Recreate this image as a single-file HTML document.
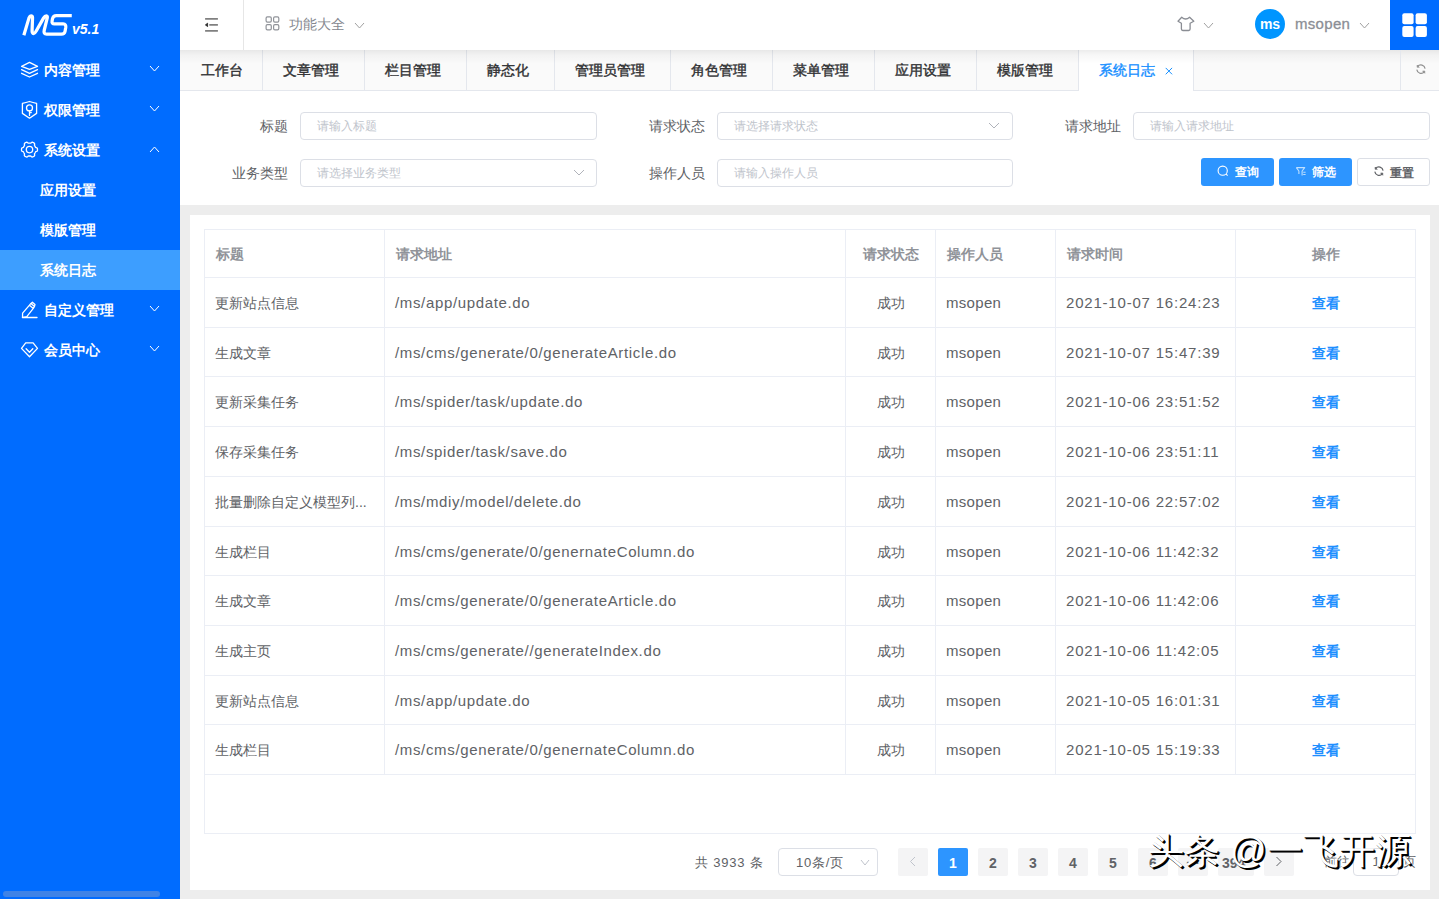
<!DOCTYPE html>
<html><head><meta charset="utf-8">
<style>
*{margin:0;padding:0;box-sizing:border-box}
html,body{width:1439px;height:899px;overflow:hidden;background:#ededed;font-family:"Liberation Sans",sans-serif;position:relative}
.abs{position:absolute}
#side{position:absolute;left:0;top:0;width:180px;height:899px;background:#006cff;color:#fff}
.mi{position:absolute;left:0;width:180px;height:40px;font-size:14px;line-height:41px;font-weight:bold}
.mi .t{position:absolute;left:44px;top:0}
.sub{position:absolute;left:0;width:180px;height:40px;font-size:14px;line-height:41px;font-weight:bold}
.sub .t{position:absolute;left:40px;top:0}
.sub.act{background:#3d9eff}
#hdr{position:absolute;left:180px;top:0;width:1259px;height:50px;background:#fff}
#tabs{position:absolute;left:180px;top:50px;width:1259px;height:41px;background:#fafafa;border-bottom:1px solid #e4e7ed}
.tab{position:absolute;top:0;height:40px;border-right:1px solid #e4e7ed;font-size:14px;font-weight:normal;-webkit-text-stroke:0.4px #303133;color:#303133;line-height:40px;padding-left:20px}
.tab.act{background:#fff;color:#1890ff;height:41px;-webkit-text-stroke:0.4px #1890ff}
.tab .x{position:absolute;left:86px;top:0;font-size:12px;font-weight:normal}
#filter{position:absolute;left:180px;top:91px;width:1259px;height:114px;background:#fff}
.lbl{position:absolute;font-size:14px;color:#606266;line-height:28px;height:28px;text-align:right;width:100px}
.inp{position:absolute;height:28px;border:1px solid #dcdfe6;border-radius:4px;background:#fff;font-size:12px;color:#c0c4cc;line-height:26px;padding-left:16px}
.btn{position:absolute;top:158px;height:28px;width:73px;border-radius:3px;font-size:12px;font-weight:bold;line-height:28px}
.btn.p{background:#2d95ff;color:#fff}
.btn.d{background:#fff;border:1px solid #dcdfe6;color:#606266}
.btn span{position:absolute;top:0}
#card{position:absolute;left:190px;top:215px;width:1240px;height:675px;background:#fff}
#tbl{position:absolute;left:204px;top:229px;width:1212px;height:605px;border:1px solid #ebeef5;background:#fff}
.vl{position:absolute;width:1px;background:#ebeef5}
.hl{position:absolute;left:0;width:1210px;height:1px;background:#ebeef5}
.th{position:absolute;font-size:14px;font-weight:bold;color:#909399;padding:0 10px 0 12px;white-space:nowrap}
.td{position:absolute;font-size:14px;color:#606266;padding:0 10px 0 11px;white-space:nowrap}
.l{text-align:left} .c{text-align:center}
.en{font-size:15px;letter-spacing:0.3px}
.dt{letter-spacing:0.8px} .url{letter-spacing:0.65px}
.lk{color:#1e8fff;font-weight:bold}
.pg{position:absolute;top:848px;height:28px;width:30px;border-radius:2px;background:#f4f4f5;color:#606266;font-size:14px;font-weight:bold;text-align:center;line-height:30px}
</style></head><body>
<div id="side">
<svg class="abs" style="left:18px;top:10px" width="60" height="30" viewBox="0 0 1439 720">
<path d="M140 605 L262 195 Q282 138 322 138 Q352 138 348 195 L338 480 Q334 565 375 565 Q405 565 440 500 L612 195 Q645 138 680 138 Q712 138 702 190 L630 480 Q605 580 690 580 L1040 580 Q1115 580 1128 515 L1145 420 Q1158 335 1085 335 L875 335 Q805 335 818 265 L828 205 Q845 133 920 133 L1290 133" fill="none" stroke="#fff" stroke-width="78" stroke-linejoin="round"/>
</svg>
<div class="abs" style="left:72px;top:21px;font-size:14px;line-height:16px;font-weight:bold;font-style:italic;color:#fff;letter-spacing:0px">v5.1</div>
<div class="mi" style="top:50px"><span class="t">内容管理</span></div><svg class="abs" style="left:18px;top:58px" width="24" height="24" viewBox="0 0 24 24" fill="none" stroke="#fff" stroke-width="1.3" stroke-linejoin="round" stroke-linecap="round"><path d="M3.6 8.4 L11.5 4.4 L19.5 8.4 L11.5 11.4Z"/><path d="M3.6 11.6 L11.5 15.4 L19.5 11.6"/><path d="M3.6 15.3 L11.5 19 L19.5 15.3"/></svg><svg class="abs" style="left:148.5px;top:65px" width="11" height="7" viewBox="-1 -1 11 7"><path d="M0 0 L4.5 5 L9 0" fill="none" stroke="#fff" stroke-width="1.0"/></svg><div class="mi" style="top:90px"><span class="t">权限管理</span></div><svg class="abs" style="left:18px;top:98px" width="24" height="24" viewBox="0 0 24 24" fill="none" stroke="#fff" stroke-width="1.3" stroke-linejoin="round" stroke-linecap="round"><path d="M4.4 5.4 Q8 4.6 11.5 3.5 Q15 4.6 18.6 5.4 L18.6 15.4 L11.5 20.2 L4.4 15.4Z"/><circle cx="11.5" cy="9.9" r="3"/><path d="M11.5 12.9 L11.5 17.4 M11.5 14.6 L13.3 14.6"/></svg><svg class="abs" style="left:148.5px;top:105px" width="11" height="7" viewBox="-1 -1 11 7"><path d="M0 0 L4.5 5 L9 0" fill="none" stroke="#fff" stroke-width="1.0"/></svg><div class="mi" style="top:130px"><span class="t">系统设置</span></div><svg class="abs" style="left:18px;top:138px" width="24" height="24" viewBox="0 0 24 24" fill="none" stroke="#fff" stroke-width="1.3" stroke-linejoin="round" stroke-linecap="round"><path d="M19.49 11.60 L19.48 11.25 L19.45 10.90 L19.39 10.56 L19.26 10.23 L18.97 9.94 L18.45 9.74 L17.93 9.57 L17.63 9.37 L17.45 9.13 L17.32 8.89 L17.19 8.64 L17.05 8.39 L16.91 8.15 L16.76 7.92 L16.61 7.68 L16.50 7.41 L16.47 7.04 L16.59 6.51 L16.67 5.96 L16.56 5.56 L16.34 5.29 L16.08 5.06 L15.79 4.86 L15.49 4.68 L15.19 4.52 L14.87 4.37 L14.54 4.25 L14.19 4.20 L13.80 4.30 L13.36 4.65 L12.96 5.02 L12.63 5.18 L12.34 5.21 L12.06 5.20 L11.78 5.19 L11.50 5.19 L11.22 5.19 L10.94 5.20 L10.66 5.21 L10.37 5.18 L10.04 5.02 L9.64 4.65 L9.20 4.30 L8.81 4.20 L8.46 4.25 L8.13 4.37 L7.81 4.52 L7.51 4.68 L7.21 4.86 L6.92 5.06 L6.66 5.29 L6.44 5.56 L6.33 5.96 L6.41 6.51 L6.53 7.04 L6.50 7.41 L6.39 7.68 L6.24 7.92 L6.09 8.15 L5.95 8.39 L5.81 8.64 L5.68 8.89 L5.55 9.13 L5.37 9.37 L5.07 9.57 L4.55 9.74 L4.03 9.94 L3.74 10.23 L3.61 10.56 L3.55 10.90 L3.52 11.25 L3.51 11.60 L3.52 11.95 L3.55 12.30 L3.61 12.64 L3.74 12.97 L4.03 13.26 L4.55 13.46 L5.07 13.63 L5.37 13.83 L5.55 14.07 L5.68 14.31 L5.81 14.56 L5.95 14.81 L6.09 15.05 L6.24 15.28 L6.39 15.52 L6.50 15.79 L6.53 16.16 L6.41 16.69 L6.33 17.24 L6.44 17.64 L6.66 17.91 L6.92 18.14 L7.21 18.34 L7.51 18.52 L7.81 18.68 L8.13 18.83 L8.46 18.95 L8.81 19.00 L9.20 18.90 L9.64 18.55 L10.04 18.18 L10.37 18.02 L10.66 17.99 L10.94 18.00 L11.22 18.01 L11.50 18.01 L11.78 18.01 L12.06 18.00 L12.34 17.99 L12.63 18.02 L12.96 18.18 L13.36 18.55 L13.80 18.90 L14.19 19.00 L14.54 18.95 L14.87 18.83 L15.19 18.68 L15.49 18.52 L15.79 18.34 L16.08 18.14 L16.34 17.91 L16.56 17.64 L16.67 17.24 L16.59 16.69 L16.47 16.16 L16.50 15.79 L16.61 15.52 L16.76 15.28 L16.91 15.05 L17.05 14.81 L17.19 14.56 L17.32 14.31 L17.45 14.07 L17.63 13.83 L17.93 13.63 L18.45 13.46 L18.97 13.26 L19.26 12.97 L19.39 12.64 L19.45 12.30 L19.48 11.95Z"/><circle cx="11.5" cy="11.6" r="3.2"/></svg><svg class="abs" style="left:148.5px;top:145.5px" width="11" height="7" viewBox="-1 -1 11 7"><path d="M0 5 L4.5 0 L9 5" fill="none" stroke="#fff" stroke-width="1.0"/></svg><div class="mi" style="top:290px"><span class="t">自定义管理</span></div><svg class="abs" style="left:18px;top:298px" width="24" height="24" viewBox="0 0 24 24" fill="none" stroke="#fff" stroke-width="1.3" stroke-linejoin="round" stroke-linecap="round"><path d="M4.5 19.5 L4.6 15.2 L11.5 7.2 L15.3 10.4 L8.8 18.6Z M11.5 7.2 L12.9 5.4 L14.4 4.2 L17 6.4 L16.5 8.4 L15.3 10.4 M12.9 5.4 L16.5 8.4 M4.4 19.5 L19 19.5"/></svg><svg class="abs" style="left:148.5px;top:305px" width="11" height="7" viewBox="-1 -1 11 7"><path d="M0 0 L4.5 5 L9 0" fill="none" stroke="#fff" stroke-width="1.0"/></svg><div class="mi" style="top:330px"><span class="t">会员中心</span></div><svg class="abs" style="left:18px;top:338px" width="24" height="24" viewBox="0 0 24 24" fill="none" stroke="#fff" stroke-width="1.3" stroke-linejoin="round" stroke-linecap="round"><path d="M7.7 4.9 L15.1 4.9 L19.5 10.4 L11.5 18.7 L3.5 10.4Z"/><path d="M8.1 10.7 L11.5 14.3 L14.8 10.7"/></svg><svg class="abs" style="left:148.5px;top:345px" width="11" height="7" viewBox="-1 -1 11 7"><path d="M0 0 L4.5 5 L9 0" fill="none" stroke="#fff" stroke-width="1.0"/></svg><div class="sub" style="top:170px"><span class="t">应用设置</span></div><div class="sub" style="top:210px"><span class="t">模版管理</span></div><div class="sub act" style="top:250px"><span class="t">系统日志</span></div>
<div class="abs" style="left:3px;top:891px;width:157px;height:6px;border-radius:3px;background:rgba(140,160,200,0.45)"></div>
</div>
<div id="hdr">
 <svg class="abs" style="left:20px;top:13px" width="24" height="24" viewBox="0 0 24 24"><path d="M5.1 5.9 H17.9 M9.3 11.9 H17.9 M5.1 17.9 H17.9" stroke="#808080" stroke-width="1.6"/><path d="M5.4 11.9 L7.6 10.2 L7.6 13.6Z" fill="#222" stroke="#222" stroke-width="0.8" stroke-linejoin="round"/></svg>
 <div class="abs" style="left:63px;top:0;width:1px;height:50px;background:#e6e6e6"></div>
 <svg class="abs" style="left:80px;top:11px" width="24" height="24" viewBox="0 0 24 24" fill="none" stroke="#909399" stroke-width="1.2"><rect x="6.1" y="5.9" width="5.2" height="5.2" rx="1.3"/><rect x="13.6" y="5.9" width="5.2" height="5.2" rx="1.3"/><rect x="6.1" y="13.6" width="5.2" height="5.2" rx="1.3"/><rect x="13.6" y="13.6" width="5.2" height="5.2" rx="1.3"/></svg>
 <div class="abs" style="left:109px;top:-1px;line-height:50px;font-size:14px;color:#85888f">功能大全</div>
 <svg class="abs" style="left:173.5px;top:22px" width="11" height="7" viewBox="-1 -1 11 7"><path d="M0 0 L4.5 5 L9 0" fill="none" stroke="#a0a0a0" stroke-width="1.0"/></svg>
 <svg class="abs" style="left:994px;top:12px" width="24" height="24" viewBox="0 0 24 24" fill="none" stroke="#8a8d94" stroke-width="1.3" stroke-linejoin="round"><path d="M7.7 5.3 Q11.6 8.8 15.6 5.3 L19.8 9.2 L16.1 11.3 L16.1 17.1 Q16.1 18.5 14.7 18.5 L8.8 18.5 Q7.4 18.5 7.4 17.1 L7.4 11.3 L4 9.2Z"/></svg>
 <svg class="abs" style="left:1023px;top:22px" width="11" height="7" viewBox="-1 -1 11 7"><path d="M0 0 L4.5 5 L9 0" fill="none" stroke="#a0a0a0" stroke-width="1.0"/></svg>
 <div class="abs" style="left:1075px;top:9px;width:30px;height:30px;border-radius:15px;background:#0095ff;color:#fff;font-size:14px;font-weight:bold;text-align:center;line-height:31px">ms</div>
 <div class="abs" style="left:1115px;top:0;line-height:48px;font-size:15px;color:#8b8e95;letter-spacing:0.3px;-webkit-text-stroke:0.3px #8b8e95">msopen</div>
 <svg class="abs" style="left:1179px;top:21.8px" width="11" height="7" viewBox="-1 -1 11 7"><path d="M0 0 L4.5 5 L9 0" fill="none" stroke="#a0a0a0" stroke-width="1.0"/></svg>
 <div class="abs" style="left:1210px;top:0;width:49px;height:50px;background:#006cff"></div>
 <svg class="abs" style="left:1222px;top:13px" width="26" height="25" viewBox="0 0 26 25" fill="#fff"><rect x="0.3" y="0.2" width="11.3" height="11" rx="2"/><rect x="13.6" y="0.2" width="11.3" height="11" rx="2"/><rect x="0.3" y="13" width="11.3" height="11" rx="2"/><rect x="13.6" y="13" width="11.3" height="11" rx="2"/></svg>
</div>
<div id="tabs">
<div class="tab" style="left:1px;width:82px">工作台</div><div class="tab" style="left:83px;width:102px">文章管理</div><div class="tab" style="left:185px;width:102px">栏目管理</div><div class="tab" style="left:287px;width:88px">静态化</div><div class="tab" style="left:375px;width:116px">管理员管理</div><div class="tab" style="left:491px;width:102px">角色管理</div><div class="tab" style="left:593px;width:102px">菜单管理</div><div class="tab" style="left:695px;width:102px">应用设置</div><div class="tab" style="left:797px;width:102px">模版管理</div><div class="tab act" style="left:899px;width:115px">系统日志</div><svg class="abs" style="left:985px;top:17px" width="8" height="8" viewBox="0 0 8 8" stroke="#1890ff" stroke-width="1"><path d="M0.7 0.9 L7.1 7.3 M7.1 0.9 L0.7 7.3"/></svg><div class="abs" style="left:0;top:0;width:1259px;height:14px;background:linear-gradient(rgba(0,0,0,0.075),rgba(0,0,0,0.03) 5px,rgba(0,0,0,0) 14px)"></div><div class="abs" style="left:1220px;top:0;width:1px;height:40px;background:#e4e7ed"></div>
<svg class="abs" style="left:1229px;top:7px" width="24" height="24" viewBox="0 0 24 24" fill="none" stroke="#909090" stroke-width="1.2"><path d="M8.6 9.4 A4.3 4.3 0 0 1 16.1 11.6"/><path d="M15.3 14.9 A4.3 4.3 0 0 1 7.8 12.7"/><path d="M8.1 8.0 L8.1 10.3 L10.3 10.3Z" fill="#909090" stroke-width="0.6"/><path d="M15.8 16.3 L15.8 14.0 L13.6 14.0Z" fill="#909090" stroke-width="0.6"/></svg>
</div>
<div id="filter">
 <div class="lbl" style="left:8px;top:21px">标题</div>
 <div class="inp" style="left:120px;top:21px;width:297px">请输入标题</div>
 <div class="lbl" style="left:425px;top:21px">请求状态</div>
 <div class="inp" style="left:537px;top:21px;width:296px">请选择请求状态</div>
 <svg class="abs" style="left:808px;top:31px" width="12" height="7" viewBox="-1 -1 12 7"><path d="M0 0 L5.0 5 L10 0" fill="none" stroke="#b0b3ba" stroke-width="1.0"/></svg>
 <div class="lbl" style="left:841px;top:21px">请求地址</div>
 <div class="inp" style="left:953px;top:21px;width:297px">请输入请求地址</div>
 <div class="lbl" style="left:8px;top:68px">业务类型</div>
 <div class="inp" style="left:120px;top:68px;width:297px">请选择业务类型</div>
 <svg class="abs" style="left:393px;top:78px" width="12" height="7" viewBox="-1 -1 12 7"><path d="M0 0 L5.0 5 L10 0" fill="none" stroke="#b0b3ba" stroke-width="1.0"/></svg>
 <div class="lbl" style="left:425px;top:68px">操作人员</div>
 <div class="inp" style="left:537px;top:68px;width:296px">请输入操作人员</div>
</div>
<div class="btn p" style="left:1201px"><span style="left:34px">查询</span></div>
<svg class="abs" style="left:1211px;top:159px" width="24" height="24" viewBox="0 0 24 24" fill="none" stroke="#fff" stroke-width="1.1"><circle cx="11.7" cy="11.7" r="4.6"/><path d="M15.2 15.2 L16.6 16.7"/></svg>
<div class="btn p" style="left:1279px"><span style="left:33px">筛选</span></div>
<svg class="abs" style="left:1289px;top:159px" width="24" height="24" viewBox="0 0 24 24" fill="none" stroke="#bfe0ff" stroke-width="1.1" stroke-linejoin="round"><path d="M7.3 8.6 L15.7 8.6 L13.1 12 L13.1 16.5 M9.9 15 L9.9 12 L7.3 8.6"/><path d="M14.2 13.3 H16.6 M14.2 15.5 H16.6"/></svg>
<div class="btn d" style="left:1357px"><span style="left:32px">重置</span></div>
<svg class="abs" style="left:1367px;top:159px" width="24" height="24" viewBox="0 0 24 24" fill="none" stroke="#606266" stroke-width="1.2"><path d="M8.6 9.4 A4.3 4.3 0 0 1 16.1 11.6"/><path d="M15.3 14.9 A4.3 4.3 0 0 1 7.8 12.7"/><path d="M8.1 8.0 L8.1 10.3 L10.3 10.3Z" fill="#606266" stroke-width="0.6"/><path d="M15.8 16.3 L15.8 14.0 L13.6 14.0Z" fill="#606266" stroke-width="0.6"/></svg>
<div id="card"></div>
<div id="tbl">
<div class="vl" style="left:179px;top:0;height:545.0px"></div><div class="vl" style="left:640px;top:0;height:545.0px"></div><div class="vl" style="left:730px;top:0;height:545.0px"></div><div class="vl" style="left:850px;top:0;height:545.0px"></div><div class="vl" style="left:1030px;top:0;height:545.0px"></div><div class="hl" style="top:47px"></div><div class="hl" style="top:96.7px"></div><div class="hl" style="top:146.4px"></div><div class="hl" style="top:196.1px"></div><div class="hl" style="top:245.8px"></div><div class="hl" style="top:295.5px"></div><div class="hl" style="top:345.2px"></div><div class="hl" style="top:394.9px"></div><div class="hl" style="top:444.6px"></div><div class="hl" style="top:494.3px"></div><div class="hl" style="top:544.0px"></div><div class="th l" style="left:-1.0px;width:180.0px;top:1px;height:47px;line-height:47px">标题</div><div class="th l" style="left:179.0px;width:461.0px;top:1px;height:47px;line-height:47px">请求地址</div><div class="th c" style="left:640.0px;width:90.0px;top:1px;height:47px;line-height:47px">请求状态</div><div class="th l" style="left:730.0px;width:120.0px;top:1px;height:47px;line-height:47px">操作人员</div><div class="th l" style="left:850.0px;width:180.0px;top:1px;height:47px;line-height:47px">请求时间</div><div class="th c" style="left:1030.0px;width:180.0px;top:1px;height:47px;line-height:47px">操作</div><div class="td l cj" style="left:-1.0px;width:180.0px;top:49.0px;height:48.7px;line-height:48.7px">更新站点信息</div><div class="td l en url" style="left:179.0px;width:461.0px;top:49.0px;height:48.7px;line-height:48.7px">/ms/app/update.do</div><div class="td c cj" style="left:640.0px;width:90.0px;top:49.0px;height:48.7px;line-height:48.7px">成功</div><div class="td l en" style="left:730.0px;width:120.0px;top:49.0px;height:48.7px;line-height:48.7px">msopen</div><div class="td l en dt" style="left:850.0px;width:180.0px;top:49.0px;height:48.7px;line-height:48.7px">2021-10-07 16:24:23</div><div class="td c cj lk" style="left:1030.0px;width:180.0px;top:49.0px;height:48.7px;line-height:48.7px">查看</div><div class="td l cj" style="left:-1.0px;width:180.0px;top:98.7px;height:48.7px;line-height:48.7px">生成文章</div><div class="td l en url" style="left:179.0px;width:461.0px;top:98.7px;height:48.7px;line-height:48.7px">/ms/cms/generate/0/generateArticle.do</div><div class="td c cj" style="left:640.0px;width:90.0px;top:98.7px;height:48.7px;line-height:48.7px">成功</div><div class="td l en" style="left:730.0px;width:120.0px;top:98.7px;height:48.7px;line-height:48.7px">msopen</div><div class="td l en dt" style="left:850.0px;width:180.0px;top:98.7px;height:48.7px;line-height:48.7px">2021-10-07 15:47:39</div><div class="td c cj lk" style="left:1030.0px;width:180.0px;top:98.7px;height:48.7px;line-height:48.7px">查看</div><div class="td l cj" style="left:-1.0px;width:180.0px;top:148.4px;height:48.7px;line-height:48.7px">更新采集任务</div><div class="td l en url" style="left:179.0px;width:461.0px;top:148.4px;height:48.7px;line-height:48.7px">/ms/spider/task/update.do</div><div class="td c cj" style="left:640.0px;width:90.0px;top:148.4px;height:48.7px;line-height:48.7px">成功</div><div class="td l en" style="left:730.0px;width:120.0px;top:148.4px;height:48.7px;line-height:48.7px">msopen</div><div class="td l en dt" style="left:850.0px;width:180.0px;top:148.4px;height:48.7px;line-height:48.7px">2021-10-06 23:51:52</div><div class="td c cj lk" style="left:1030.0px;width:180.0px;top:148.4px;height:48.7px;line-height:48.7px">查看</div><div class="td l cj" style="left:-1.0px;width:180.0px;top:198.1px;height:48.7px;line-height:48.7px">保存采集任务</div><div class="td l en url" style="left:179.0px;width:461.0px;top:198.1px;height:48.7px;line-height:48.7px">/ms/spider/task/save.do</div><div class="td c cj" style="left:640.0px;width:90.0px;top:198.1px;height:48.7px;line-height:48.7px">成功</div><div class="td l en" style="left:730.0px;width:120.0px;top:198.1px;height:48.7px;line-height:48.7px">msopen</div><div class="td l en dt" style="left:850.0px;width:180.0px;top:198.1px;height:48.7px;line-height:48.7px">2021-10-06 23:51:11</div><div class="td c cj lk" style="left:1030.0px;width:180.0px;top:198.1px;height:48.7px;line-height:48.7px">查看</div><div class="td l cj" style="left:-1.0px;width:180.0px;top:247.8px;height:48.7px;line-height:48.7px">批量删除自定义模型列...</div><div class="td l en url" style="left:179.0px;width:461.0px;top:247.8px;height:48.7px;line-height:48.7px">/ms/mdiy/model/delete.do</div><div class="td c cj" style="left:640.0px;width:90.0px;top:247.8px;height:48.7px;line-height:48.7px">成功</div><div class="td l en" style="left:730.0px;width:120.0px;top:247.8px;height:48.7px;line-height:48.7px">msopen</div><div class="td l en dt" style="left:850.0px;width:180.0px;top:247.8px;height:48.7px;line-height:48.7px">2021-10-06 22:57:02</div><div class="td c cj lk" style="left:1030.0px;width:180.0px;top:247.8px;height:48.7px;line-height:48.7px">查看</div><div class="td l cj" style="left:-1.0px;width:180.0px;top:297.5px;height:48.7px;line-height:48.7px">生成栏目</div><div class="td l en url" style="left:179.0px;width:461.0px;top:297.5px;height:48.7px;line-height:48.7px">/ms/cms/generate/0/genernateColumn.do</div><div class="td c cj" style="left:640.0px;width:90.0px;top:297.5px;height:48.7px;line-height:48.7px">成功</div><div class="td l en" style="left:730.0px;width:120.0px;top:297.5px;height:48.7px;line-height:48.7px">msopen</div><div class="td l en dt" style="left:850.0px;width:180.0px;top:297.5px;height:48.7px;line-height:48.7px">2021-10-06 11:42:32</div><div class="td c cj lk" style="left:1030.0px;width:180.0px;top:297.5px;height:48.7px;line-height:48.7px">查看</div><div class="td l cj" style="left:-1.0px;width:180.0px;top:347.2px;height:48.7px;line-height:48.7px">生成文章</div><div class="td l en url" style="left:179.0px;width:461.0px;top:347.2px;height:48.7px;line-height:48.7px">/ms/cms/generate/0/generateArticle.do</div><div class="td c cj" style="left:640.0px;width:90.0px;top:347.2px;height:48.7px;line-height:48.7px">成功</div><div class="td l en" style="left:730.0px;width:120.0px;top:347.2px;height:48.7px;line-height:48.7px">msopen</div><div class="td l en dt" style="left:850.0px;width:180.0px;top:347.2px;height:48.7px;line-height:48.7px">2021-10-06 11:42:06</div><div class="td c cj lk" style="left:1030.0px;width:180.0px;top:347.2px;height:48.7px;line-height:48.7px">查看</div><div class="td l cj" style="left:-1.0px;width:180.0px;top:396.9px;height:48.7px;line-height:48.7px">生成主页</div><div class="td l en url" style="left:179.0px;width:461.0px;top:396.9px;height:48.7px;line-height:48.7px">/ms/cms/generate//generateIndex.do</div><div class="td c cj" style="left:640.0px;width:90.0px;top:396.9px;height:48.7px;line-height:48.7px">成功</div><div class="td l en" style="left:730.0px;width:120.0px;top:396.9px;height:48.7px;line-height:48.7px">msopen</div><div class="td l en dt" style="left:850.0px;width:180.0px;top:396.9px;height:48.7px;line-height:48.7px">2021-10-06 11:42:05</div><div class="td c cj lk" style="left:1030.0px;width:180.0px;top:396.9px;height:48.7px;line-height:48.7px">查看</div><div class="td l cj" style="left:-1.0px;width:180.0px;top:446.6px;height:48.7px;line-height:48.7px">更新站点信息</div><div class="td l en url" style="left:179.0px;width:461.0px;top:446.6px;height:48.7px;line-height:48.7px">/ms/app/update.do</div><div class="td c cj" style="left:640.0px;width:90.0px;top:446.6px;height:48.7px;line-height:48.7px">成功</div><div class="td l en" style="left:730.0px;width:120.0px;top:446.6px;height:48.7px;line-height:48.7px">msopen</div><div class="td l en dt" style="left:850.0px;width:180.0px;top:446.6px;height:48.7px;line-height:48.7px">2021-10-05 16:01:31</div><div class="td c cj lk" style="left:1030.0px;width:180.0px;top:446.6px;height:48.7px;line-height:48.7px">查看</div><div class="td l cj" style="left:-1.0px;width:180.0px;top:496.3px;height:48.7px;line-height:48.7px">生成栏目</div><div class="td l en url" style="left:179.0px;width:461.0px;top:496.3px;height:48.7px;line-height:48.7px">/ms/cms/generate/0/genernateColumn.do</div><div class="td c cj" style="left:640.0px;width:90.0px;top:496.3px;height:48.7px;line-height:48.7px">成功</div><div class="td l en" style="left:730.0px;width:120.0px;top:496.3px;height:48.7px;line-height:48.7px">msopen</div><div class="td l en dt" style="left:850.0px;width:180.0px;top:496.3px;height:48.7px;line-height:48.7px">2021-10-05 15:19:33</div><div class="td c cj lk" style="left:1030.0px;width:180.0px;top:496.3px;height:48.7px;line-height:48.7px">查看</div>
</div>
<div class="abs" style="left:695px;top:849px;line-height:28px;font-size:13px;color:#606266;letter-spacing:0.8px">共 3933 条</div>
<div class="inp" style="left:778px;top:848px;width:100px;color:#606266;font-size:13px;padding-left:17px;letter-spacing:0.8px;line-height:28px">10条/页</div>
<svg class="abs" style="left:860px;top:859px" width="10" height="7" viewBox="-1 -1 10 7"><path d="M0 0 L4.0 5 L8 0" fill="none" stroke="#c0c4cc" stroke-width="1.0"/></svg>
<div class="pg" style="left:898px"></div><svg class="abs" style="left:909px;top:856px" width="8" height="12" viewBox="0 0 8 12" fill="none" stroke="#c0c4cc" stroke-width="1"><path d="M6 1 L1.5 5.5 L6 10"/></svg>
<div class="pg" style="left:938px;background:#2d95ff;color:#fff">1</div>
<div class="pg" style="left:978px">2</div>
<div class="pg" style="left:1018px">3</div>
<div class="pg" style="left:1058px">4</div>
<div class="pg" style="left:1098px">5</div>
<div class="pg" style="left:1138px">6</div>
<div class="pg" style="left:1178px">···</div>
<div class="pg" style="left:1218px;width:36px;text-align:left;padding-left:4px">394</div>
<div class="pg" style="left:1264px"></div><svg class="abs" style="left:1275px;top:856px" width="8" height="12" viewBox="0 0 8 12" fill="none" stroke="#606266" stroke-width="1"><path d="M1.5 1 L6 5.5 L1.5 10"/></svg>
<div class="abs" style="left:1324px;top:848px;line-height:28px;font-size:13px;color:#606266">前往</div>
<div class="inp" style="left:1353px;top:848px;width:46px;color:#606266;font-size:13px;padding-left:0;text-align:center">1</div>
<div class="abs" style="left:1403px;top:848px;line-height:28px;font-size:13px;color:#606266">页</div>
<div class="abs" style="left:1148px;top:824px;font-size:36px;line-height:54px;color:#fff;font-weight:normal;white-space:nowrap;text-shadow:1px 1px 0 #000,2px 2px 0.3px #000">头条 @一飞开源</div>
</body></html>
